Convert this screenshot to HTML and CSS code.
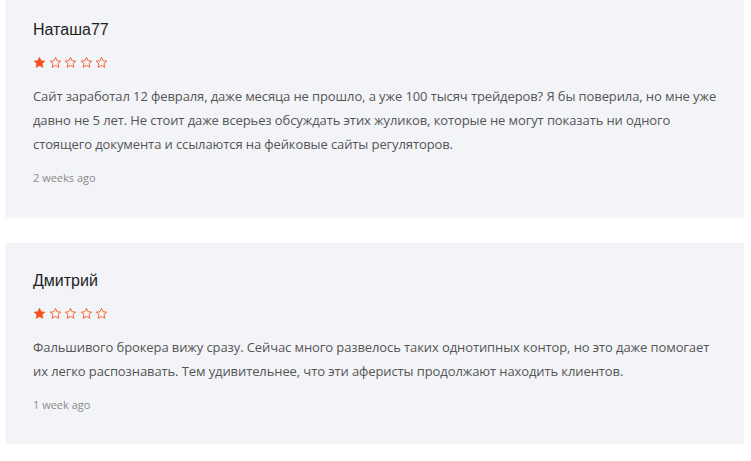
FILE: index.html
```html
<!doctype html>
<html lang="ru">
    <head>
        <meta charset="UTF-8" />
        <meta name="viewport" content="width=device-width, initial-scale=1.0" />
        <title>Отзывы</title>
        <link rel="stylesheet" href="styles.css">
    </head>
    <body>
        <div class="reviews">
            <div class="review">
                <div class="review-name">Наташа77</div>
                <div class="stars">
                    <svg class="star" viewBox="0 0 24 24"><path class="full" d="M12 2.5l2.9 6.3 6.9.7-5.2 4.6 1.5 6.8L12 17.4l-6.1 3.5 1.5-6.8-5.2-4.6 6.9-.7z"/></svg>
                    <svg class="star" viewBox="0 0 24 24"><path class="empty" d="M12 2.5l2.9 6.3 6.9.7-5.2 4.6 1.5 6.8L12 17.4l-6.1 3.5 1.5-6.8-5.2-4.6 6.9-.7z"/></svg>
                    <svg class="star" viewBox="0 0 24 24"><path class="empty" d="M12 2.5l2.9 6.3 6.9.7-5.2 4.6 1.5 6.8L12 17.4l-6.1 3.5 1.5-6.8-5.2-4.6 6.9-.7z"/></svg>
                    <svg class="star" viewBox="0 0 24 24"><path class="empty" d="M12 2.5l2.9 6.3 6.9.7-5.2 4.6 1.5 6.8L12 17.4l-6.1 3.5 1.5-6.8-5.2-4.6 6.9-.7z"/></svg>
                    <svg class="star" viewBox="0 0 24 24"><path class="empty" d="M12 2.5l2.9 6.3 6.9.7-5.2 4.6 1.5 6.8L12 17.4l-6.1 3.5 1.5-6.8-5.2-4.6 6.9-.7z"/></svg>
                </div>
                <p class="review-text">Сайт заработал 12 февраля, даже месяца не прошло, а уже 100 тысяч трейдеров? Я бы поверила, но мне уже давно не 5 лет. Не стоит даже всерьез обсуждать этих жуликов, которые не могут показать ни одного стоящего документа и ссылаются на фейковые сайты регуляторов.</p>
                <div class="review-date">2 weeks ago</div>
            </div>

            <div class="review">
                <div class="review-name">Дмитрий</div>
                <div class="stars">
                    <svg class="star" viewBox="0 0 24 24"><path class="full" d="M12 2.5l2.9 6.3 6.9.7-5.2 4.6 1.5 6.8L12 17.4l-6.1 3.5 1.5-6.8-5.2-4.6 6.9-.7z"/></svg>
                    <svg class="star" viewBox="0 0 24 24"><path class="empty" d="M12 2.5l2.9 6.3 6.9.7-5.2 4.6 1.5 6.8L12 17.4l-6.1 3.5 1.5-6.8-5.2-4.6 6.9-.7z"/></svg>
                    <svg class="star" viewBox="0 0 24 24"><path class="empty" d="M12 2.5l2.9 6.3 6.9.7-5.2 4.6 1.5 6.8L12 17.4l-6.1 3.5 1.5-6.8-5.2-4.6 6.9-.7z"/></svg>
                    <svg class="star" viewBox="0 0 24 24"><path class="empty" d="M12 2.5l2.9 6.3 6.9.7-5.2 4.6 1.5 6.8L12 17.4l-6.1 3.5 1.5-6.8-5.2-4.6 6.9-.7z"/></svg>
                    <svg class="star" viewBox="0 0 24 24"><path class="empty" d="M12 2.5l2.9 6.3 6.9.7-5.2 4.6 1.5 6.8L12 17.4l-6.1 3.5 1.5-6.8-5.2-4.6 6.9-.7z"/></svg>
                </div>
                <p class="review-text">Фальшивого брокера вижу сразу. Сейчас много развелось таких однотипных контор, но это даже помогает их легко распознавать. Тем удивительнее, что эти аферисты продолжают находить клиентов.</p>
                <div class="review-date">1 week ago</div>
            </div>
        </div>
    </body>
</html>
```

FILE: styles.css
```css
body {
    margin: 0;
    background: #fff;
    font-family: "Open Sans", Arial, sans-serif;
    overflow: hidden;
}
.reviews {
    display: flex;
    flex-direction: column;
    gap: 26px;
    margin: -8px 7px 0 6px;
}
.review {
    background: #f3f4f8;
    padding: 26px 18px 29px 27px;
    box-shadow: 0 1px 3px rgba(0, 0, 0, 0.04);
}
.review-name {
    font-family: "Liberation Sans", Arial, sans-serif;
    font-size: 16px;
    line-height: 24px;
    color: #1e1e1e;
}
.stars {
    display: flex;
    gap: 2.5px;
    margin-top: 13px;
    height: 14px;
    align-items: center;
}
.star {
    width: 13px;
    height: 13px;
}
.star .full {
    fill: #f4511e;
    stroke: #f4511e;
    stroke-width: 1.5;
    stroke-linejoin: round;
}
.star .empty {
    fill: none;
    stroke: #f4511e;
    stroke-width: 1.6;
    stroke-linejoin: round;
}
.review-text {
    margin: 15px 0 0;
    font-size: 13px;
    line-height: 24px;
    letter-spacing: -0.1px;
    color: #555;
}
.review-date {
    margin-top: 12px;
    font-size: 11px;
    line-height: 20px;
    color: #8a8a8a;
}
```
